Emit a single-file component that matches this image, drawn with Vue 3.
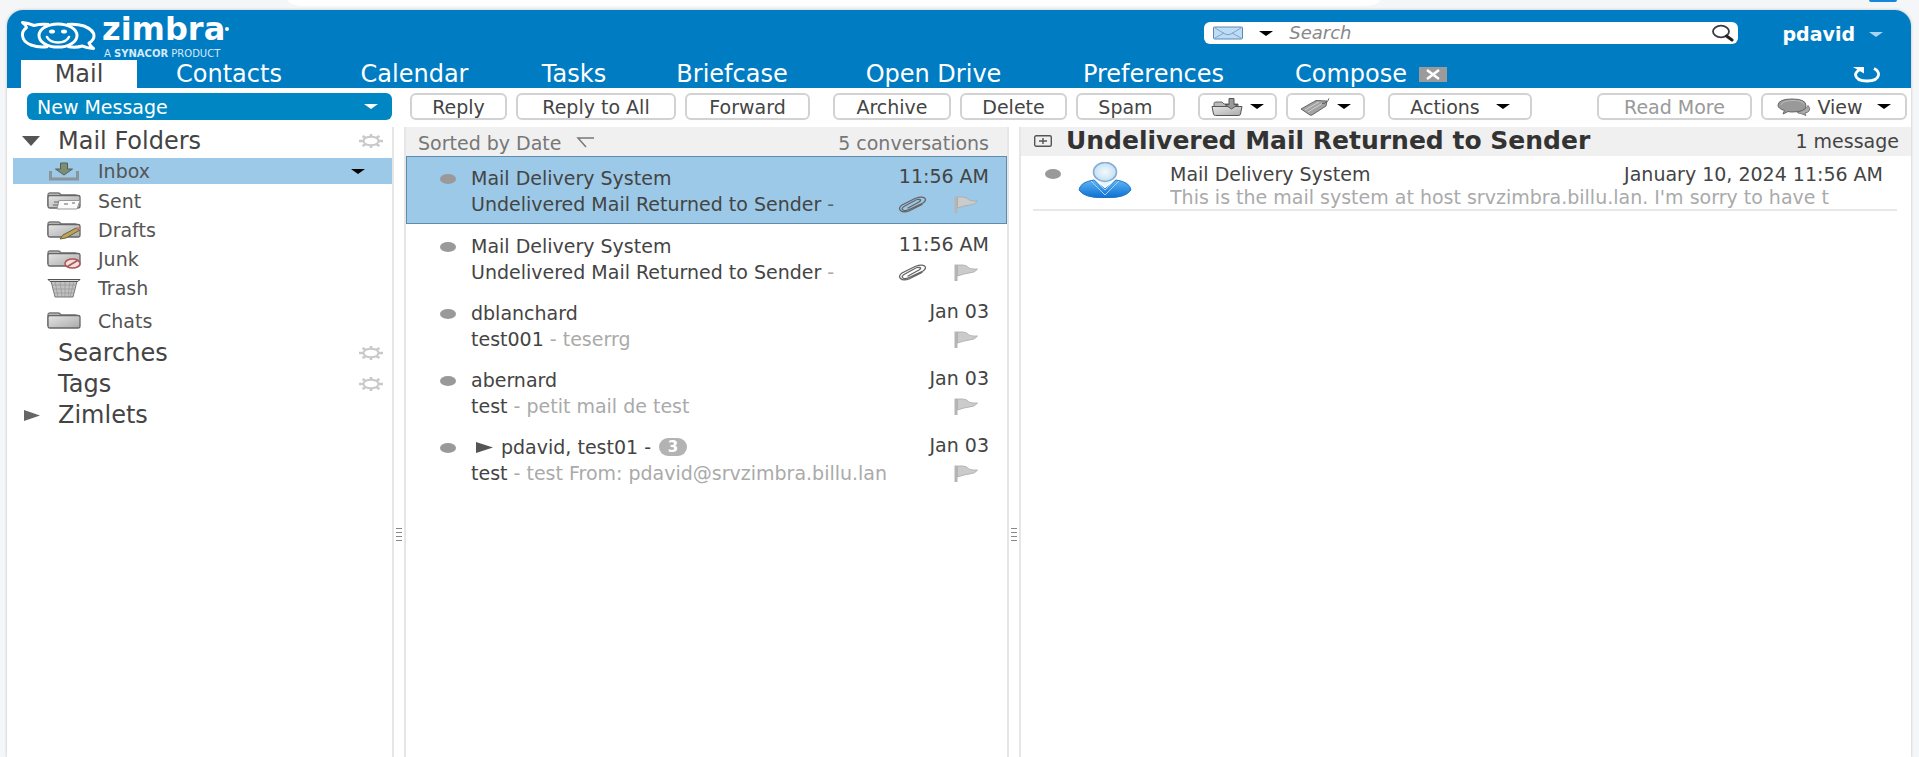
<script setup>
import { ref } from 'vue'

const query = ref('')
const tabs = ['Mail', 'Contacts', 'Calendar', 'Tasks', 'Briefcase', 'Open Drive', 'Preferences']
const folders = ['Inbox', 'Sent', 'Drafts', 'Junk', 'Trash', 'Chats']
const groups = [
  { name: 'Searches', gear: true },
  { name: 'Tags', gear: true },
  { name: 'Zimlets', arrow: true }
]
const conversations = [
  { from: 'Mail Delivery System', time: '11:56 AM', subject: 'Undelivered Mail Returned to Sender', dash: ' -', clip: true, selected: true },
  { from: 'Mail Delivery System', time: '11:56 AM', subject: 'Undelivered Mail Returned to Sender', dash: ' -', clip: true },
  { from: 'dblanchard', time: 'Jan 03', subject: 'test001', dash: ' - teserrg' },
  { from: 'abernard', time: 'Jan 03', subject: 'test', dash: ' - petit mail de test' },
  { from: 'pdavid, test01 -', time: 'Jan 03', subject: 'test', dash: ' - test From: pdavid@srvzimbra.billu.lan', count: 3 }
]
</script>

<template>
  <div class="page">
    <svg width="0" height="0" class="defs" aria-hidden="true">
      <defs>
        <linearGradient id="steel" x1="0" y1="0" x2="1" y2="1"><stop offset="0" stop-color="#e6e6e6" /><stop offset="1" stop-color="#a9a9a9" /></linearGradient>
        <linearGradient id="sky" x1="0" y1="0" x2="0" y2="1"><stop offset="0" stop-color="#5fb4f5" /><stop offset="1" stop-color="#0b6fd0" /></linearGradient>
        <radialGradient id="face"><stop offset="0" stop-color="#f3f9fd" /><stop offset="1" stop-color="#c4e0f4" /></radialGradient>
        <symbol id="gear" viewBox="0 0 24 14" preserveAspectRatio="none">
          <path d="M12 0v14M0 7h24M3.500 2l17 10M20.500 2l-17 10" stroke="#c9c9c9" stroke-width="2.600" />
          <ellipse cx="12" cy="7" rx="7.500" ry="4.300" fill="#fff" stroke="#c9c9c9" stroke-width="2" />
        </symbol>
        <symbol id="folder" viewBox="0 0 34 20" preserveAspectRatio="none">
          <path d="M1 15V4q0-2 2-2h8q2 0 3 2h14q2 0 2 2" fill="#cfcfcf" stroke="#777" stroke-width="1.3" />
          <path d="M1 15V6q0-1.500 2-1.500h28q2 0 2 1.500v9q0 2-2 2H3q-2 0-2-2z" fill="url(#steel)" stroke="#666" stroke-width="1.3" />
        </symbol>
        <symbol id="flag" viewBox="0 0 24 17" preserveAspectRatio="none">
          <path d="M0.500 0.500h3V17h-3z" fill="#b5b5b5" />
          <path d="M3.500 1h5q4 0 6 2.500 2 1.800 9 1.500-2 3.500-8 4-5 .5-12 3z" fill="#cbcbcb" stroke="#a9a9a9" stroke-width=".8" />
        </symbol>
        <symbol id="clip" viewBox="0 0 30 17" preserveAspectRatio="none">
          <path d="M10 12L21 6q3-2 .5-2.500T16 5L6 10.500q-3 2-1 3.500t6-.5L25 7q4-3 1.500-5T17 2.500L4 9q-4 3-1.500 5.500T11 15l13-6.500" fill="none" stroke="#646464" stroke-width="1.300" stroke-linecap="round" />
        </symbol>
      </defs>
    </svg>

    <div class="chrome"><i class="address"></i><i class="badge"></i></div>

    <div class="app">
      <header class="banner">
        <div class="top">
          <a href="#" class="logo" aria-label="zimbra">
            <svg width="76" height="29" viewBox="0 0 76 29" fill="none" stroke="#fff" stroke-width="3" stroke-linejoin="round">
              <path d="M28 3.500q-8-1-15 1Q7 2 1.500 1.500q3.500 2.500 4 5Q1 10 1.500 14.500 2 21 10 24q8 3 17 1.500" />
              <path d="M46 3.500q9-1 17 1.500 10 4 10 10 0 4-5 7 1 3 4.500 5.500-7-.5-11-2.500-7 2-15 .5" />
              <ellipse cx="37" cy="14.500" rx="19" ry="11.600" />
              <path d="M26 16q3 5.500 11 5.500T48 16" stroke-linecap="round" stroke-width="2.600" />
              <ellipse cx="31" cy="10.500" rx="3" ry="2" fill="#fff" stroke="none" /><ellipse cx="43" cy="10.500" rx="3" ry="2" fill="#fff" stroke="none" />
            </svg>
            <span class="brand"><b>zimbra</b><small>A <strong>SYNACOR</strong> PRODUCT</small></span>
            <i class="mark"></i>
          </a>
          <form class="search" role="search" @submit.prevent>
            <button type="button" class="scope" aria-label="Search type">
              <svg width="30" height="14" viewBox="0 0 30 14"><rect x=".5" y="1" width="29" height="12" rx="1" fill="#bddcf5" stroke="#5d87b5" /><path d="M2 2l10 6q3 1.500 6 0l10-6M2 12l9-5M28 12l-9-5" fill="none" stroke="#7fa3c8" /></svg>
              <i class="caret"></i>
            </button>
            <input v-model="query" type="text" placeholder="Search" aria-label="Search" />
            <button class="go" aria-label="Run search">
              <svg width="24" height="18" viewBox="0 0 24 18"><ellipse cx="10" cy="7.500" rx="8" ry="5.800" fill="none" stroke="#3a3a44" stroke-width="1.800" /><path d="M15.500 12l5.500 4" stroke="#222" stroke-width="3" stroke-linecap="round" /></svg>
            </button>
          </form>
          <button class="user">pdavid <i class="caret"></i></button>
        </div>
        <nav class="tabs">
          <a v-for="(t, i) in tabs" :key="t" href="#" :class="{ active: i === 0 }">{{ t }}</a>
          <div class="compose">
            <a href="#">Compose</a>
            <button class="close" aria-label="Close tab"><svg width="28" height="15" viewBox="0 0 28 15"><rect width="28" height="15" fill="#9b9b9b" /><path d="M8 3l12 9M20 3L8 12" stroke="#fff" stroke-width="2.600" /></svg></button>
          </div>
          <button class="refresh" aria-label="Refresh">
            <svg width="30" height="17" viewBox="0 0 30 17"><path d="M22 2.500q5 2.500 4.500 6.500-1 6-11.500 6T3.500 9Q3.500 6 8 3.500" fill="none" stroke="#fff" stroke-width="2.800" /><path d="M1 1h11v6.500z" fill="#fff" /></svg>
          </button>
        </nav>
      </header>

      <div class="toolbar">
        <div class="compose-cell"><button class="new">New Message <i class="caret"></i></button></div>
        <div class="actions">
          <button class="w-reply">Reply</button>
          <button class="w-all">Reply to All</button>
          <button class="w-forward group-end">Forward</button>
          <button class="w-archive">Archive</button>
          <button class="w-delete">Delete</button>
          <button class="w-spam group-end">Spam</button>
          <button class="w-icon" aria-label="Move to folder">
            <svg width="32" height="18" viewBox="0 0 32 18"><path d="M3 9V5.500q0-1.500 2-1.500h6l2 2h14v3" fill="#bbb" stroke="#666" /><path d="M1 8.500h30L29.500 16q-.3 1.500-2 1.500h-23q-1.700 0-2-1.500z" fill="url(#steel)" stroke="#555" /><path d="M18 .5h5v6h4L20.500 11 14 6.500h4z" fill="#999" stroke="#555" /></svg>
            <i class="caret"></i>
          </button>
          <button class="w-icon group-end" aria-label="Tag">
            <svg width="30" height="18" viewBox="0 0 30 18"><path d="M1 11L16 2.500 27 3l-1 5-14 9q-1 .5-2 0z" fill="#a2a2a2" stroke="#666" /><path d="M5 12l14-8M8 14l14-8.500" stroke="#d0d0d0" /><path d="M22 5.500q5 0 7-5" fill="none" stroke="#555" /></svg>
            <i class="caret"></i>
          </button>
          <button class="w-actions">Actions <i class="caret"></i></button>
          <span class="spring"></span>
          <button class="w-more" disabled>Read More</button>
          <button class="w-view">
            <svg width="34" height="18" viewBox="0 0 34 18"><path d="M20 13.500q9-1 11-6 3 3 1 5.500-1 1.500-4 2l1 2.500-5-2q-4 0-4-2z" fill="#aaa" stroke="#666" stroke-width=".8" /><path d="M15 1q14 0 14 6.500T15 14q-2 0-4-.5L6 16l1.500-3.500Q1 10.500 1 7.500 1 1 15 1z" fill="#999" stroke="#666" /><path d="M4 7q1-4 11-4.500t12 4" fill="none" stroke="#bbb" /></svg>
            View <i class="caret"></i>
          </button>
        </div>
      </div>

      <main class="panes">
        <aside class="tree">
          <div class="group"><span class="tri"><svg width="18" height="10"><path d="M0 0h18L9 10z" fill="#555" /></svg></span><h2>Mail Folders</h2><button aria-label="Folder options"><svg width="24" height="14"><use href="#gear" /></svg></button></div>
          <a v-for="(f, i) in folders" :key="f" href="#" class="folder" :class="{ current: i === 0, last: i === 5 }">
            <svg v-if="i === 0" width="32" height="19" viewBox="0 0 32 19"><path d="M4 10.500H2.500V17h27v-6.500H28" fill="none" stroke="#8b939b" stroke-width="3" /><path d="M12.500 1h7v6h5L16 13 7.500 7h5z" fill="#7c8c76" stroke="#566250" /></svg>
            <svg v-else-if="i === 4" width="32" height="20" viewBox="0 0 32 20"><path d="M3 3h26l-4 16H7z" fill="#c2c2c2" /><path d="M7 3l3 16M12 3l2 16M17 3v16M22 3l-2 16M26 3l-4 16M5 7h22M6 11h20M7 15h18" stroke="#9a9a9a" stroke-width=".8" /><path d="M3 3l4 16h18l4-16" fill="none" stroke="#777" /><path d="M0 1.500h32l-2 2H2z" fill="#ddd" stroke="#555" /></svg>
            <svg v-else width="34" height="20" viewBox="0 0 34 20">
              <use href="#folder" width="34" height="20" />
              <g v-if="i === 1"><path d="M12 9.500h21l-3 8.500H10z" fill="#fafafa" stroke="#999" /><path d="M7 11h5M6 14h5M17 13h4M25 12h3" stroke="#666" /></g>
              <g v-if="i === 2"><path d="M13 19l3-4L29 8l4 2-14 8z" fill="#b9a45c" stroke="#6d623b" /><path d="M29 8l4 2 1-2-2-1z" fill="#d77" /></g>
              <g v-if="i === 3"><ellipse cx="25.500" cy="14.500" rx="7.500" ry="4.600" fill="#f4dede" stroke="#a55" stroke-width="1.500" /><path d="M20.500 17.500l10-6" stroke="#a55" stroke-width="1.500" /></g>
            </svg>
            <span>{{ f }}</span><i v-if="i === 0" class="caret"></i>
          </a>
          <div v-for="g in groups" :key="g.name" class="group">
            <span class="tri"><svg v-if="g.arrow" width="18" height="11" viewBox="0 0 18 11"><path d="M2 0l16 5.500L2 11z" fill="#666" /></svg></span><h2>{{ g.name }}</h2>
            <button v-if="g.gear" :aria-label="g.name + ' options'"><svg width="24" height="14"><use href="#gear" /></svg></button>
          </div>
        </aside>

        <div class="sash"><i></i></div>

        <section class="list">
          <div class="bar"><button>Sorted by Date <svg width="18" height="11" viewBox="0 0 18 11"><path d="M18 1H2l8 9" fill="none" stroke="#777" stroke-width="1.500" /></svg></button><span>5 conversations</span></div>
          <article v-for="(c, i) in conversations" :key="i" :class="{ selected: c.selected }">
            <i class="dot"></i>
            <div class="text">
              <div class="line who">
                <svg v-if="c.count" class="expand" width="18" height="11" viewBox="0 0 18 11"><path d="M1 0l17 5.500L1 11z" fill="#555" /></svg>
                <span>{{ c.from }}</span><b v-if="c.count" class="count">{{ c.count }}</b>
                <time>{{ c.time }}</time>
              </div>
              <div class="line">
                <p>{{ c.subject }}<span>{{ c.dash }}</span></p>
                <svg v-if="c.clip" class="clip" width="30" height="17"><use href="#clip" /></svg>
                <svg class="flag" width="24" height="17"><use href="#flag" /></svg>
              </div>
            </div>
          </article>
        </section>

        <div class="sash"><i></i></div>

        <section class="reader">
          <div class="bar">
            <button aria-label="Expand all"><svg width="18" height="12" viewBox="0 0 18 12" fill="none" stroke="#555"><rect x=".7" y=".7" width="16.600" height="10.600" rx="1.500" stroke-width="1.400" /><path d="M5 6h8M9 3v6" stroke-width="1.400" /></svg></button>
            <h1>Undelivered Mail Returned to Sender</h1><span>1 message</span>
          </div>
          <div class="message">
            <i class="dot"></i>
            <svg class="avatar" width="54" height="36" viewBox="0 0 54 36">
              <path d="M1 28q1-8 15-10l11 9 11-9q14 2 15 10-5 8-26 8T1 28z" fill="url(#sky)" stroke="#2678c4" />
              <path d="M20 18h14l-7 8z" fill="#e9f4fc" />
              <path d="M13 19l14 14 14-14M18 19l9 9 9-9" fill="none" stroke="#a9d3f6" />
              <ellipse cx="27" cy="10" rx="11.500" ry="9.500" fill="url(#face)" stroke="#86aed2" stroke-width="1.600" />
            </svg>
            <div class="summary">
              <div class="line"><span>Mail Delivery System</span><time>January 10, 2024 11:56 AM</time></div>
              <p>This is the mail system at host srvzimbra.billu.lan. I'm sorry to have t</p>
            </div>
          </div>
        </section>
      </main>
    </div>
  </div>
</template>

<style>
body { margin: 0; background: #f5f6f7; }
</style>

<style scoped>
.page { display: flex; flex-direction: column; min-height: 100vh; font: 19px/26px "DejaVu Sans", "Noto Sans", sans-serif; color: #444; }
.page *, .page { box-sizing: border-box; }
.defs { position: absolute; }
button { font: inherit; color: inherit; border: 0; background: none; padding: 0; margin: 0; cursor: pointer; }
a { color: inherit; text-decoration: none; }
h1, h2, p { margin: 0; }
svg { flex: none; display: block; }
.caret { flex: none; width: 0; height: 0; border: 7px solid transparent; border-top: 5px solid #000; border-bottom: 0; }
.chrome { height: 10px; display: flex; justify-content: space-between; align-items: flex-start; padding: 0 22px 0 288px; }
.address { width: 1092px; height: 6px; background: #fff; border-radius: 0 0 16px 16px / 0 0 6px 6px; }
.badge { width: 28px; height: 2px; background: #1687d9; border-radius: 0 0 8px 8px; }
.app { flex: 1; display: flex; flex-direction: column; margin: 0 8px 0 7px; background: #fff; border-radius: 16px 16px 0 0; box-shadow: 0 0 3px #bbb; }
.banner { background: #007cc3; color: #fff; border-radius: 16px 16px 0 0; padding-left: 14px; }
.top { height: 50px; display: flex; align-items: center; }
.logo { display: flex; align-items: center; margin-right: auto; }
.brand { display: flex; flex-direction: column; padding-left: 5px; }
.brand b { font-size: 32px; line-height: 37px; }
.brand small { font-size: 10px; line-height: 12px; padding-left: 2px; color: #d5eafa; }
.mark { width: 4px; height: 4px; border-radius: 50%; background: #fff; align-self: flex-start; margin-top: 16px; }
.search { display: flex; align-items: center; width: calc(28% + 5px); height: 22px; margin-top: -4px; background: #fff; border-radius: 6px; padding: 0 3px 0 9px; }
.scope { display: flex; align-items: center; gap: 16px; }
.search input { flex: 1; min-width: 0; margin: 0 10px 0 16px; border: 0; outline: 0; padding: 0; height: 22px; font: inherit; font-size: 18px; background: none; color: #333; }
.search input::placeholder { font-style: italic; color: #888; opacity: 1; }
.user { display: flex; align-items: center; gap: 14px; margin: -2px 28px 0 44px; font-weight: bold; }
.user .caret { border-top-color: #a8d5f5; }
.tabs { display: grid; grid-template-columns: 116px 184px 187px 132px 184px 219px 221px auto 1fr; height: 28px; font-size: 24px; line-height: 28px; text-align: center; }
.tabs .active { background: #fff; color: #444; }
.compose { display: flex; align-items: center; gap: 12px; padding-left: 31px; }
.refresh { justify-self: end; margin-right: 29px; }
.toolbar { display: flex; height: 39px; padding: 5px 4px 0 0; }
.compose-cell { width: 403px; padding-left: 20px; }
.new { display: flex; align-items: center; justify-content: space-between; width: 365px; height: 27px; padding: 0 14px 0 10px; background: #0087c3; color: #fff; border-radius: 6px; }
.new .caret { border-top-color: #fff; }
.actions { flex: 1; display: flex; gap: 9px; }
.actions button { display: flex; align-items: center; justify-content: center; height: 27px; border: 2px solid #d2d2d2; border-radius: 6px; white-space: nowrap; }
.actions .group-end { margin-right: 14px; }
.spring { flex: 1; }
.w-reply { width: 97px; }
.w-all { width: 160px; }
.w-forward { width: 125px; }
.w-archive { width: 118px; }
.w-delete { width: 107px; }
.w-spam { width: 99px; }
.w-icon { width: 79px; gap: 7px; }
.w-actions { width: 144px; gap: 16px; }
.w-more { width: 155px; }
.w-more:disabled { color: #999; }
.w-view { width: 146px; gap: 6px; }
.w-view .caret { margin-left: 8px; }
.panes { flex: 1; display: grid; grid-template-columns: 387fr 10px 605fr 10px 892fr; }
.tree { border-right: 2px solid #e6e6e6; }
.group { display: flex; align-items: center; height: 31px; padding: 0 9px 4px 15px; }
.group h2 { flex: 1; font-size: 24px; line-height: 26px; font-weight: normal; }
.tri { width: 36px; }
.folder { display: flex; align-items: center; height: 29px; margin-left: 6px; padding-left: 34px; color: #555; }
.folder svg { width: 34px; }
.folder span { flex: 1; padding-left: 17px; }
.folder.current { height: 26px; margin-bottom: 2px; background: #9bc9e7; padding-right: 27px; }
.folder.last { height: 37px; }
.group:last-child { height: 32px; }
.sash { display: flex; align-items: center; justify-content: center; padding-top: 188px; }
.sash i { width: 6px; height: 16px; background: repeating-linear-gradient(#888 0 1px, #fff 1px 4px); }
.bar { display: flex; align-items: center; height: 29px; background: #f0f0f0; }
.list { border: 2px solid #e6e6e6; border-width: 0 2px; min-width: 0; }
.list .bar { justify-content: space-between; padding: 2px 18px 0 12px; color: #777; }
.list .bar button { display: flex; align-items: center; gap: 14px; }
article { display: flex; height: 67px; padding: 8px 17px 0 33px; border: 1px solid transparent; }
article.selected { height: 68px; background: #9bc9e7; border-color: #5f8cab; }
.dot { flex: none; width: 16px; height: 10px; margin-top: 9px; border-radius: 50%; background: #999; }
.text { flex: 1; min-width: 0; padding-left: 15px; }
.line { display: flex; align-items: center; height: 26px; white-space: nowrap; }
.line time { margin-left: auto; color: #444; }
.line p { flex: 1; min-width: 0; overflow: hidden; }
.line p span { color: #aaa; }
.selected .line p span { color: #567; }
.list .who time { margin-bottom: 4px; }
.expand { margin: 0 8px 0 4px; }
.count { margin-left: 8px; width: 28px; height: 18px; border-radius: 9px; background: #b3b3b3; color: #fff; font-size: 15px; line-height: 18px; text-align: center; }
.clip { margin-right: 26px; }
.flag { margin-right: 11px; }
.reader { border-left: 2px solid #e6e6e6; min-width: 0; }
.reader .bar { padding: 0 12px 2px 13px; }
.reader h1 { flex: 1; padding-left: 14px; font-size: 25px; line-height: 27px; color: #333; white-space: nowrap; }
.message { display: flex; height: 55px; margin: 0 14px 0 12px; padding: 6px 14px 0 12px; border-bottom: 2px solid #e8e8e8; }
.message .dot { margin-top: 7px; }
.avatar { margin-left: 17px; }
.summary { flex: 1; min-width: 0; padding-left: 38px; }
.summary .line { height: 24px; }
.summary p { line-height: 22px; color: #aaa; white-space: nowrap; overflow: hidden; }
</style>
